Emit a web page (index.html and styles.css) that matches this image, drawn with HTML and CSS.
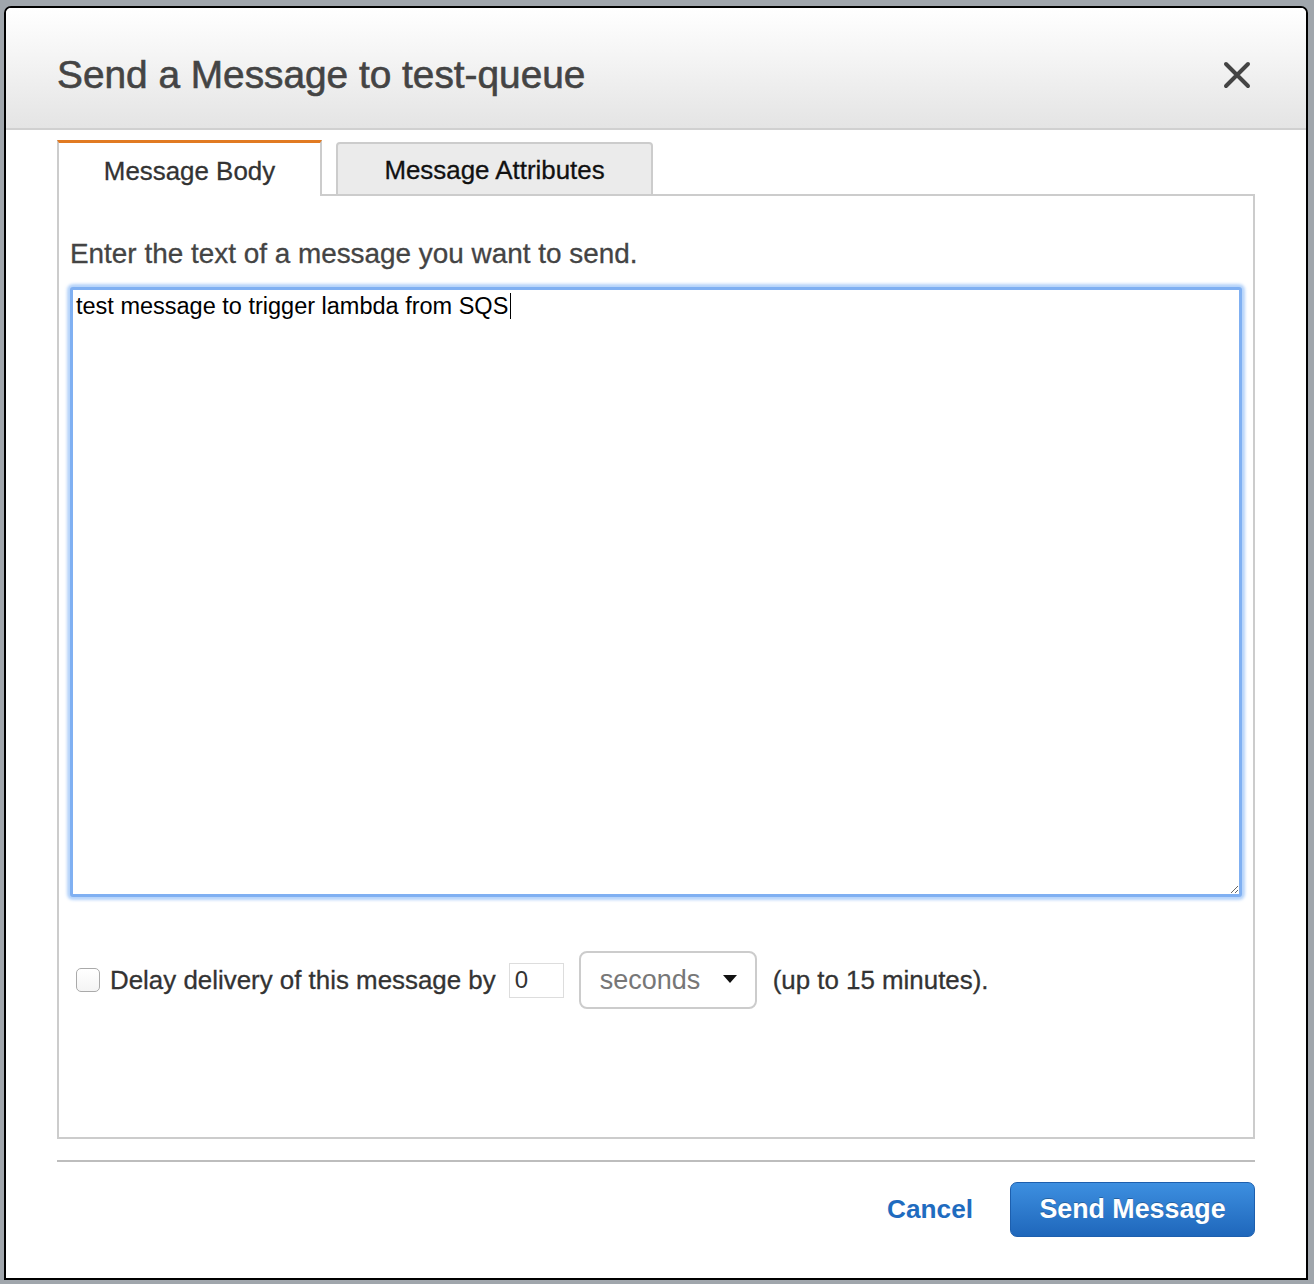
FILE: index.html
```html
<!DOCTYPE html>
<html lang="en">
<head>
<meta charset="utf-8">
<title>Send a Message to test-queue</title>
<link rel="stylesheet" href="styles.css">
</head>
<body>
<div class="modal">
  <div class="modal-header">
    <h1 class="modal-title">Send a Message to test-queue</h1>
    <button class="close-btn" aria-label="Close">
      <svg width="28" height="28" viewBox="0 0 28 28"><path d="M3 3 L25 25 M25 3 L3 25" stroke="#444" stroke-width="4" stroke-linecap="round" fill="none"/></svg>
    </button>
  </div>
  <div class="modal-body">
    <div class="tabs">
      <div class="tab tab-active">Message Body</div>
      <div class="tab tab-inactive">Message Attributes</div>
    </div>
    <div class="panel">
      <p class="label">Enter the text of a message you want to send.</p>
      <div class="textarea-wrap">
        <textarea class="message-input">test message to trigger lambda from SQS</textarea>
        <span class="text-caret"></span>
      </div>
      <div class="delay-row">
        <input type="checkbox" class="checkbox">
        <span class="delay-text">Delay delivery of this message by</span>
        <input type="text" class="delay-input" value="0">
        <div class="select">
          <span class="select-text">seconds</span>
          <svg class="caret" width="14" height="8" viewBox="0 0 14 8"><path d="M0 0 H14 L7 8 Z" fill="#111"/></svg>
        </div>
        <span class="delay-text">(up to 15 minutes).</span>
      </div>
    </div>
    <div class="separator"></div>
    <div class="footer">
      <a class="cancel">Cancel</a>
      <button class="send-btn">Send Message</button>
    </div>
  </div>
</div>
</body>
</html>
```

FILE: styles.css
```css
html, body {
  margin: 0;
  padding: 0;
}
body {
  background: #a0a6ac;
  font-family: "Liberation Sans", Arial, Helvetica, sans-serif;
  width: 1314px;
  height: 1284px;
  overflow: hidden;
}
.modal {
  box-sizing: border-box;
  margin: 6px 0 0 4px;
  width: 1304px;
  height: 1274px;
  border: 2px solid #000;
  border-radius: 7px 7px 0 0;
  background: #fff;
  overflow: hidden;
}
.modal-header {
  box-sizing: border-box;
  height: 122px;
  padding: 14px 55px 0 51px;
  display: flex;
  align-items: center;
  justify-content: space-between;
  background: linear-gradient(#ffffff 0%, #f6f6f6 35%, #e4e4e4 100%);
  border-bottom: 2px solid #d0d0d0;
}
.modal-title {
  margin: 0;
  font-size: 38.8px;
  font-weight: normal;
  color: #444;
  line-height: 46px;
  -webkit-text-stroke: 0.6px #444;
}
.close-btn {
  border: 0;
  background: none;
  padding: 0;
  width: 28px;
  height: 28px;
  display: flex;
}
.modal-body {
  padding: 10px 51px 0 51px;
}
.tabs {
  display: flex;
  align-items: flex-end;
  gap: 14px;
  height: 56px;
  margin-bottom: -2px;
  position: relative;
}
.tab {
  box-sizing: border-box;
  display: flex;
  align-items: center;
  justify-content: center;
  font-size: 25.9px;
  -webkit-text-stroke: 0.3px currentColor;
}
.tab-active {
  width: 265px;
  height: 56px;
  background: #fff;
  border-top: 3px solid #e17a22;
  border-left: 2px solid #ccc;
  border-right: 2px solid #ccc;
  color: #333;
  padding-top: 3px;
}
.tab-inactive {
  width: 317px;
  height: 54px;
  background: #ebebeb;
  border: 2px solid #ccc;
  border-radius: 4px 4px 0 0;
  color: #111;
  padding-top: 3px;
}
.panel {
  box-sizing: border-box;
  height: 945px;
  border: 2px solid #ccc;
  padding: 42px 11px 0 11px;
}
.label {
  margin: 0 0 17px 0;
  font-size: 27.9px;
  line-height: 32px;
  color: #444;
  -webkit-text-stroke: 0.3px #444;
}
.textarea-wrap {
  position: relative;
  width: 1172px;
  height: 610px;
}
.message-input {
  display: block;
  box-sizing: border-box;
  width: 1172px;
  height: 610px;
  margin: 0;
  padding: 2px 3px;
  border: 3px solid #80b0f2;
  border-radius: 3px;
  box-shadow: 0 0 3px 3px rgba(150, 192, 248, 0.7);
  outline: none;
  font-family: "Liberation Sans", Arial, sans-serif;
  font-size: 23.5px;
  line-height: 28px;
  color: #000;
  resize: both;
}
.text-caret {
  position: absolute;
  left: 440px;
  top: 6px;
  width: 1px;
  height: 26px;
  background: #000;
}
.delay-row {
  display: flex;
  align-items: center;
  margin: 54px 0 0 6px;
  height: 58px;
}
.checkbox {
  appearance: none;
  -webkit-appearance: none;
  box-sizing: border-box;
  width: 24px;
  height: 24px;
  margin: 0 10px 0 0;
  border: 1px solid #aaa;
  border-radius: 5px;
  background: linear-gradient(#fff, #f4f4f4);
}
.delay-text {
  font-size: 25.9px;
  color: #333;
  -webkit-text-stroke: 0.3px #333;
}
.delay-input {
  box-sizing: border-box;
  width: 55px;
  height: 35px;
  margin: 0 15px 0 13px;
  padding: 0 5px;
  border: 1px solid #ddd;
  font-family: "Liberation Sans", Arial, sans-serif;
  font-size: 24px;
  color: #333;
  outline: none;
}
.select {
  box-sizing: border-box;
  width: 178px;
  height: 58px;
  margin-right: 16px;
  border: 2px solid #ccc;
  border-radius: 8px;
  display: flex;
  align-items: center;
  justify-content: space-between;
  padding: 0 18px 0 19px;
  background: #fff;
}
.select-text {
  font-size: 27px;
  color: #777;
}
.caret {
  display: block;
  margin-top: -2px;
}
.separator {
  height: 2px;
  background: #bdbdbd;
  margin-top: 21px;
}
.footer {
  display: flex;
  justify-content: flex-end;
  align-items: center;
  gap: 37px;
  margin-top: 20px;
}
.cancel {
  font-size: 26.2px;
  font-weight: bold;
  color: #1f6cbf;
  cursor: pointer;
}
.send-btn {
  box-sizing: border-box;
  width: 245px;
  height: 55px;
  border: 1px solid #1d5fae;
  border-radius: 7px;
  background: linear-gradient(#3d8fe0, #1f67bb);
  color: #fff;
  font-family: "Liberation Sans", Arial, sans-serif;
  font-size: 26.8px;
  font-weight: bold;
  text-shadow: 0 -1px 0 rgba(0,0,0,0.25);
  padding: 0;
}
```
